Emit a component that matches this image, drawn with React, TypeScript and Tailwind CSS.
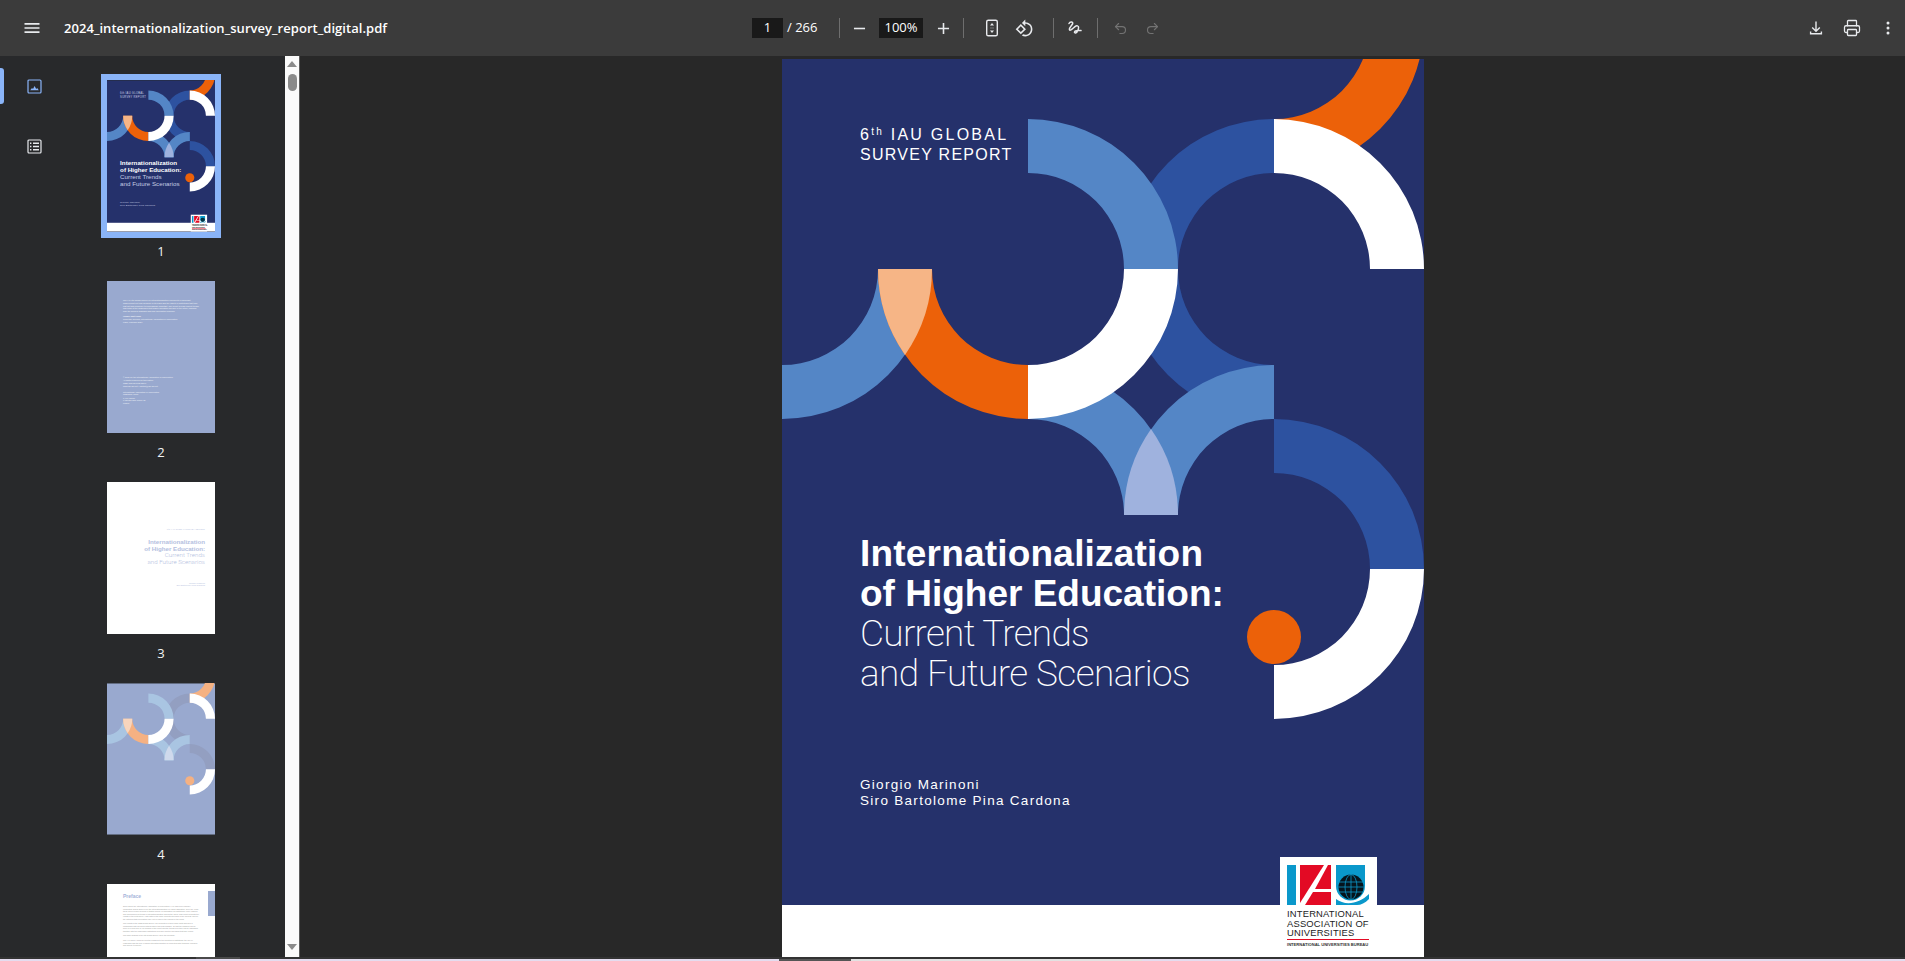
import { Printer, Undo2, Redo2 } from "lucide-react";

const R = 150;
const r = 96;

function quarter(cx: number, cy: number, q: "tl" | "tr" | "bl" | "br") {
  if (q === "tr") return `M${cx} ${cy - R}A${R} ${R} 0 0 1 ${cx + R} ${cy}L${cx + r} ${cy}A${r} ${r} 0 0 0 ${cx} ${cy - r}Z`;
  if (q === "br") return `M${cx + R} ${cy}A${R} ${R} 0 0 1 ${cx} ${cy + R}L${cx} ${cy + r}A${r} ${r} 0 0 0 ${cx + r} ${cy}Z`;
  if (q === "bl") return `M${cx} ${cy + R}A${R} ${R} 0 0 1 ${cx - R} ${cy}L${cx - r} ${cy}A${r} ${r} 0 0 0 ${cx} ${cy + r}Z`;
  return `M${cx - R} ${cy}A${R} ${R} 0 0 1 ${cx} ${cy - R}L${cx} ${cy - r}A${r} ${r} 0 0 0 ${cx - r} ${cy}Z`;
}

const navyArt = { dark: "#2d52a0", light: "#5486c6", orange: "#ec6109", peach: "#f6b586", lens: "#9fb2de" };
const paleArt = { dark: "#939fc1", light: "#a9c5e2", orange: "#f5b182", peach: "#f8d5bd", lens: "#cfd9ec" };

function CoverArt({ art }: { art: typeof navyArt }) {
  return (
    <>
      <path d={quarter(492, 210, "tl")} fill={art.dark} />
      <path d={quarter(492, 210, "bl")} fill={art.dark} />
      <path d={quarter(246, 456, "tr")} fill={art.light} />
      <path d={quarter(492, 456, "tl")} fill={art.light} />
      <path d="M342 456A150 150 0 0 1 369 370.1A150 150 0 0 1 396 456Z" fill={art.lens} />
      <path d={quarter(492, 510, "tr")} fill={art.dark} />
      <path d={quarter(492, 510, "br")} fill="#fff" />
      <circle cx={492} cy={578} r={27} fill={art.orange} />
      <path d={quarter(492, -36, "br")} fill={art.orange} />
      <path d={quarter(492, 210, "tr")} fill="#fff" />
      <path d={quarter(0, 210, "br")} fill={art.light} />
      <path d={quarter(246, 210, "bl")} fill={art.orange} />
      <path d="M96 210H150A150 150 0 0 1 123 295.9A150 150 0 0 1 96 210Z" fill={art.peach} />
      <path d={quarter(246, 210, "tr")} fill={art.light} />
      <path d={quarter(246, 210, "br")} fill="#fff" />
    </>
  );
}

function IauShapes() {
  return (
    <>
      <rect x="0" y="0" width="9" height="40" fill="#0a98cb" />
      <path d="M13 0H37L13 38Z" fill="#e30a24" />
      <path d="M41 0H44V24H28Z" fill="#e30a24" />
      <path d="M26 27H44V40H18Z" fill="#e30a24" />
      <path d="M49 0H78V21A14.5 14.5 0 0 1 49 21Z" fill="#0a98cb" />
      <path d="M49 34C58 41 72 39 82 29V34C78 38 74 40 70 40H49Z" fill="#0a98cb" />
      <circle cx="64" cy="22" r="12.5" fill="#06141c" />
      <g stroke="#0a98cb" strokeWidth="0.8" fill="none">
        <path d="M52 17H76M51.5 22H76.5M52 27H76" />
        <ellipse cx="64" cy="22" rx="6" ry="12.5" />
        <path d="M64 9.5V34.5" />
      </g>
    </>
  );
}

function Page() {
  return (
    <div className="relative flex h-[898px] w-[642px] shrink-0 flex-col overflow-hidden bg-[#25316b] font-['Liberation_Sans',sans-serif] text-white">
      <svg className="absolute inset-0" width="642" height="898" viewBox="0 0 642 898">
        <CoverArt art={navyArt} />
      </svg>
      <div className="relative pl-[78px] pt-[66px] text-[16px] leading-[20px]">
        <div className="tracking-[2.25px]">
          6<sup className="text-[10px]">th</sup> IAU GLOBAL
        </div>
        <div className="tracking-[1.27px]">SURVEY REPORT</div>
      </div>
      <div className="relative mt-[369px] pl-[78px] text-[37px] leading-[40px]">
        <div className="font-bold tracking-[0.2px]">Internationalization</div>
        <div className="font-bold tracking-[0px]">of Higher Education:</div>
        <div className="font-['Roboto',sans-serif] font-extralight tracking-[-0.7px]">Current Trends</div>
        <div className="font-['Roboto',sans-serif] font-extralight tracking-[-0.55px]">and Future Scenarios</div>
      </div>
      <div className="relative mt-[83px] pl-[78px] text-[13.5px] leading-[16px] tracking-[1.3px]">
        <div>Giorgio Marinoni</div>
        <div>Siro Bartolome Pina Cardona</div>
      </div>
      <div className="relative mt-auto h-[52px] bg-white" />
      <div className="absolute left-[498px] top-[798px] h-[100px] w-[97px] bg-white pl-[7px] pt-[8px]">
        <svg width="82" height="40" viewBox="0 0 82 40" className="block">
          <IauShapes />
        </svg>
        <div className="mt-[4px] whitespace-nowrap text-[9.4px] leading-[9.6px] tracking-[0.2px] text-[#222]">
          <div>INTERNATIONAL</div>
          <div>ASSOCIATION OF</div>
          <div>UNIVERSITIES</div>
        </div>
        <div className="mt-[1px] h-px w-[82px] bg-[#e30a24]" />
        <div className="mt-[2px] whitespace-nowrap text-[4.1px] font-bold leading-[5px] text-[#333]">
          INTERNATIONAL UNIVERSITIES BUREAU
        </div>
      </div>
    </div>
  );
}

function ThumbOne() {
  const font = "Liberation Sans, sans-serif";
  return (
    <svg width="108" height="152" viewBox="0 0 642 898" className="block" style={{ fontFamily: font }}>
      <rect width="642" height="898" fill="#25316b" />
      <CoverArt art={navyArt} />
      <rect y="846" width="642" height="52" fill="#fff" />
      <text x="78" y="82" fill="#c9cfe4" fontSize="16" letterSpacing="1.5">6th IAU GLOBAL</text>
      <text x="78" y="102" fill="#c9cfe4" fontSize="16" letterSpacing="1.5">SURVEY REPORT</text>
      <text x="78" y="503" fill="#fff" fontSize="37" fontWeight="700">Internationalization</text>
      <text x="78" y="544" fill="#fff" fontSize="37" fontWeight="700">of Higher Education:</text>
      <text x="78" y="585" fill="#c4cbe3" fontSize="37">Current Trends</text>
      <text x="78" y="626" fill="#c4cbe3" fontSize="37">and Future Scenarios</text>
      <text x="78" y="730" fill="#c9cfe4" fontSize="14" letterSpacing="1">Giorgio Marinoni</text>
      <text x="78" y="746" fill="#c9cfe4" fontSize="14" letterSpacing="1">Siro Bartolome Pina Cardona</text>
      <rect x="498" y="798" width="97" height="100" fill="#fff" />
      <g transform="translate(505 806)">
        <IauShapes />
      </g>
      <g fill="#111" fontSize="11" fontWeight="700">
        <text x="505" y="857">INTERNATIONAL</text>
        <text x="505" y="867">ASSOCIATION OF</text>
        <text x="505" y="877">UNIVERSITIES</text>
      </g>
      <rect x="505" y="880" width="82" height="4" fill="#e30a24" />
      <text x="505" y="890" fill="#111" fontSize="4.5" fontWeight="700">INTERNATIONAL UNIVERSITIES BUREAU</text>
    </svg>
  );
}

function ThumbTwo() {
  return (
    <div className="h-[152px] w-[108px] overflow-hidden bg-[#99a9cf] pl-[16px] pt-[18px] font-['Liberation_Sans',sans-serif] text-[2.1px] leading-[2.75px] text-white/80">
      <div className="w-[76px]">
        The IAU 6th Global Survey on Internationalization represents a significant achievement not only because of its reach and the variety of institutions that took part but also because it is increasingly important. The report reveals current trends and looks at the challenges that higher education will face in the future, showing how the world is changing and how universities respond.
      </div>
      <div className="mt-[2.5px] font-bold">Hilligje van't Land</div>
      <div>Secretary General, International Association of Universities</div>
      <div className="mt-[.5px]">Paris, February 2024</div>
      <div className="mt-[52px] w-[60px]">
        <div>© 2024 by the International Association of Universities</div>
        <div>All rights reserved for this edition</div>
        <div className="mt-[.5px]">ISBN 978-92-9002-215-6</div>
        <div>www.iau-aiu.net / contact@iau-aiu.net</div>
        <div className="mt-[3px]">International Association of Universities</div>
        <div>UNESCO House</div>
        <div className="mt-[.5px]">1, rue Miollis</div>
        <div>F-75732 Paris Cedex 15</div>
        <div>France</div>
      </div>
    </div>
  );
}

function ThumbThree() {
  return (
    <div className="flex h-[152px] w-[108px] flex-col items-end overflow-hidden bg-white pr-[10px] pt-[46px] font-['Liberation_Sans',sans-serif] text-[#b4c0e0]">
      <div className="text-[2.1px] leading-[3px] tracking-[0.15px]">6th IAU GLOBAL SURVEY REPORT</div>
      <div className="mt-[7px] text-right text-[6.2px] leading-[7px]">
        <div className="font-bold">Internationalization</div>
        <div className="font-bold">of Higher Education:</div>
        <div className="font-['Roboto',sans-serif] font-light">Current Trends</div>
        <div className="font-['Roboto',sans-serif] font-light">and Future Scenarios</div>
      </div>
      <div className="mt-[16px] text-right text-[2.2px] leading-[2.4px]">
        <div>Giorgio Marinoni</div>
        <div>Siro Bartolome Pina Cardona</div>
      </div>
    </div>
  );
}

function ThumbFour() {
  return (
    <svg width="108" height="152" viewBox="0 0 642 898" className="block">
      <rect width="642" height="898" fill="#99a9cf" />
      <CoverArt art={paleArt} />
    </svg>
  );
}

function ThumbFive() {
  return (
    <div className="relative h-[152px] w-[108px] overflow-hidden bg-white pl-[16px] pt-[9px] font-['Liberation_Sans',sans-serif]">
      <div className="absolute right-0 top-[7px] h-[25px] w-[7px] bg-[#99a9cf]" />
      <div className="text-[5px] font-bold leading-[7px] text-[#a5b3da]">Preface</div>
      <div className="mt-[5px] w-[77px] text-[1.9px] leading-[2.55px] text-[#9a9a9a]">
        <p>
          Since 2003, the International Association of Universities (IAU) has been regularly conducting Global Surveys on the Internationalization of Higher Education. Over the years these surveys have become a trusted source of information for institutions, policy makers and researchers on trends in internationalization around the world. This report presents the results of the sixth survey, with data on the aims, benefits and risks of the process, and on the activities that universities carry out in each of the regions of the world.
        </p>
        <p className="mt-[2px]">
          The results of the 2023 Global Survey are presented in three main parts and offer a comparison with previous editions where this was possible, so that the changes can be seen in a clear way by all readers of the report and the trends over time can be discussed, together with the challenges institutions now face and the scenarios that may unfold.
        </p>
        <p className="mt-[2px]">The main findings of the 6th Global Survey were the following.</p>
        <p className="mt-[2px]">
          The IAU survey looks beyond the numbers to the priorities of institutions, the role of leadership and the way in which internationalization is connected with teaching, research and service to society.
        </p>
      </div>
    </div>
  );
}

const thumbs = [
  { n: 1, el: <ThumbOne />, on: true },
  { n: 2, el: <ThumbTwo /> },
  { n: 3, el: <ThumbThree /> },
  { n: 4, el: <ThumbFour /> },
  { n: 5, el: <ThumbFive /> },
];

function Sep() {
  return <div className="h-[20px] w-px shrink-0 bg-[#6e6e6e]" />;
}

function IconBtn({ children, className = "" }: { children: React.ReactNode; className?: string }) {
  return <button className={`flex h-8 w-8 shrink-0 items-center justify-center text-[#e8eaed] ${className}`}>{children}</button>;
}

function Toolbar() {
  return (
    <div className="flex h-14 shrink-0 items-center bg-[#3b3b3b] font-['Open_Sans',sans-serif] text-[13px] text-white">
      <div className="flex w-[752px] shrink-0 items-center">
        <button className="ml-[16px] flex h-8 w-8 items-center justify-center">
          <svg width="20" height="20" viewBox="0 0 24 24" fill="#e8eaed">
            <path d="M3 18h18v-2H3v2zm0-5h18v-2H3v2zm0-7v2h18V6H3z" />
          </svg>
        </button>
        <div className="ml-[16px] pt-[2px] font-semibold tracking-[0.04px]">2024_internationalization_survey_report_digital.pdf</div>
      </div>
      <div className="flex h-[20px] w-[31px] shrink-0 items-center justify-center bg-[#191919]">1</div>
      <div className="ml-[4px] w-[30px] shrink-0 whitespace-nowrap">/ 266</div>
      <div className="ml-[22px]"><Sep /></div>
      <IconBtn className="ml-[3px]">
        <svg width="19" height="19" viewBox="0 0 24 24" fill="currentColor"><path d="M19 13H5v-2h14v2z" /></svg>
      </IconBtn>
      <div className="ml-[4px] flex h-[20px] w-[44px] shrink-0 items-center justify-center bg-[#191919]">100%</div>
      <IconBtn className="ml-[4px]">
        <svg width="19" height="19" viewBox="0 0 24 24" fill="currentColor"><path d="M19 13h-6v6h-2v-6H5v-2h6V5h2v6h6v2z" /></svg>
      </IconBtn>
      <div className="ml-[4px]"><Sep /></div>
      <IconBtn className="ml-[12px]">
        <svg width="20" height="20" viewBox="0 0 20 20" fill="none" stroke="currentColor" strokeWidth="1.4">
          <rect x="4.7" y="2.2" width="10.6" height="15.6" rx="1.6" />
          <path d="M10 4.9 12 7.4H8ZM10 15.1 12 12.6H8Z" fill="currentColor" stroke="none" />
          <path d="M8 10h4" strokeWidth="0.7" opacity="0.5" />
        </svg>
      </IconBtn>
      <IconBtn>
        <svg width="19" height="19" viewBox="0 0 24 24" fill="currentColor">
          <path d="M7.34 6.41L.86 12.9l6.49 6.48 6.49-6.48-6.5-6.49zM3.69 12.9l3.66-3.66L11 12.9l-3.66 3.66-3.65-3.66zm15.67-6.26C17.61 4.88 15.3 4 13 4V.76L8.76 5 13 9.24V6c1.79 0 3.58.68 4.95 2.05 2.73 2.73 2.73 7.17 0 9.9C16.58 19.32 14.79 20 13 20c-.97 0-1.94-.21-2.84-.61l-1.49 1.49C10.02 21.62 11.51 22 13 22c2.3 0 4.61-.88 6.36-2.64 3.52-3.51 3.52-9.21 0-12.72z" />
        </svg>
      </IconBtn>
      <div className="ml-[13px]"><Sep /></div>
      <IconBtn className="ml-[5px]">
        <svg width="18" height="18" viewBox="0 0 18 18" fill="none" stroke="currentColor" strokeWidth="1.5" strokeLinecap="round">
          <path d="M3 4.5C4 2.6 6.6 2.4 6.8 4 7 5.8 3 8.2 3.4 10.6 3.8 12.6 7 9.2 9 7.6c1.6-1.3 3.8-1 3.6 1.2-.2 2.6-2.4 6.2-3.8 5-1.2-1 1-3 6.2-2.2" />
        </svg>
      </IconBtn>
      <div className="ml-[6px]"><Sep /></div>
      <IconBtn className="ml-[6px]">
        <Undo2 size={15} strokeWidth={1.8} className="text-[#737373]" />
      </IconBtn>
      <IconBtn>
        <Redo2 size={15} strokeWidth={1.8} className="text-[#737373]" />
      </IconBtn>
      <div className="flex flex-1 items-center justify-end gap-1 pr-[1px]">
        <IconBtn>
          <svg width="16" height="16" viewBox="0 0 16 16" fill="none" stroke="currentColor" strokeWidth="1.4">
            <path d="M8 1.5V11M4.2 7.4 8 11.2l3.8-3.8M2.6 11.4v2.4h10.8v-2.4" />
          </svg>
        </IconBtn>
        <IconBtn>
          <Printer size={18} strokeWidth={1.7} />
        </IconBtn>
        <IconBtn>
          <svg width="4" height="16" viewBox="0 0 4 16" fill="currentColor">
            <circle cx="2" cy="3" r="1.5" />
            <circle cx="2" cy="8" r="1.5" />
            <circle cx="2" cy="13" r="1.5" />
          </svg>
        </IconBtn>
      </div>
    </div>
  );
}

function Sidebar() {
  return (
    <div className="flex h-full w-[300px] shrink-0 bg-[#28292b]">
      <div className="flex w-[68px] shrink-0 flex-col items-center gap-6 pt-3">
        <button className="relative flex h-9 w-[68px] items-center justify-center text-[#8ab4f8]">
          <span className="absolute left-0 top-0 h-9 w-1 rounded-r-[3px] bg-[#8ab4f8]" />
          <svg width="15" height="15" viewBox="0 0 15 15" fill="none">
            <rect x="1" y="1" width="13" height="13" rx="1" stroke="currentColor" strokeWidth="1.2" />
            <path d="M3.2 11.3 5 9l1 1 1.6-3 1.6 3 1-1 1.6 2.3Z" fill="currentColor" />
          </svg>
        </button>
        <button className="flex h-9 w-[68px] items-center justify-center text-[#e8eaed]">
          <svg width="15" height="15" viewBox="0 0 15 15" fill="none" stroke="currentColor" strokeWidth="1.2">
            <rect x="1" y="1" width="13" height="13" rx="1" />
            <path d="M6 4.2h6M6 7.5h6M6 10.8h6" strokeWidth="1.4" />
            <path d="M3 4.2h1.4M3 7.5h1.4M3 10.8h1.4" strokeWidth="1.4" />
          </svg>
        </button>
      </div>
      <div className="w-[217px] shrink-0 overflow-hidden pl-[33px] pt-[24px]">
        {thumbs.map((t) => (
          <div key={t.n} className="flex w-[120px] flex-col items-center">
            <div className={t.on ? "outline-[6px] outline-solid outline-[#8ab4f8]" : ""}>{t.el}</div>
            <div className="h-[49px] pt-[10px] font-['Open_Sans',sans-serif] text-[13px] leading-[18px] text-[#f1f3f4]">{t.n}</div>
          </div>
        ))}
      </div>
      <div className="flex w-[15px] shrink-0 flex-col items-center border-r-[1px] border-[#5a5a5a] bg-[#fafafa]">
        <div className="mt-[5px] h-0 w-0 border-x-[5px] border-b-[6px] border-x-transparent border-b-[#8a8a8a]" />
        <div className="mt-[7px] h-[17px] w-[9px] rounded-[5px] bg-[#8a8a8a]" />
        <div className="mt-auto mb-[7px] h-0 w-0 border-x-[5px] border-t-[6px] border-x-transparent border-t-[#8a8a8a]" />
      </div>
    </div>
  );
}

export default function App() {
  return (
    <div className="flex h-[961px] w-[1905px] flex-col overflow-hidden bg-[#282828]">
      <Toolbar />
      <div className="flex h-[901px] shrink-0">
        <Sidebar />
        <div className="flex-1 overflow-hidden pl-[482px] pt-[3px]">
          <Page />
        </div>
      </div>
      <div className="flex h-[2px] shrink-0 bg-[#333]">
        <div className="ml-[196px] w-[44px] bg-[#4a4a4a]" />
      </div>
      <div className="flex h-[2px] shrink-0 bg-[#e4dcef]">
        <div className="ml-[779px] w-[72px] bg-[#555]" />
        <div className="w-[291px] bg-[#e2e2e2]" />
      </div>
    </div>
  );
}
